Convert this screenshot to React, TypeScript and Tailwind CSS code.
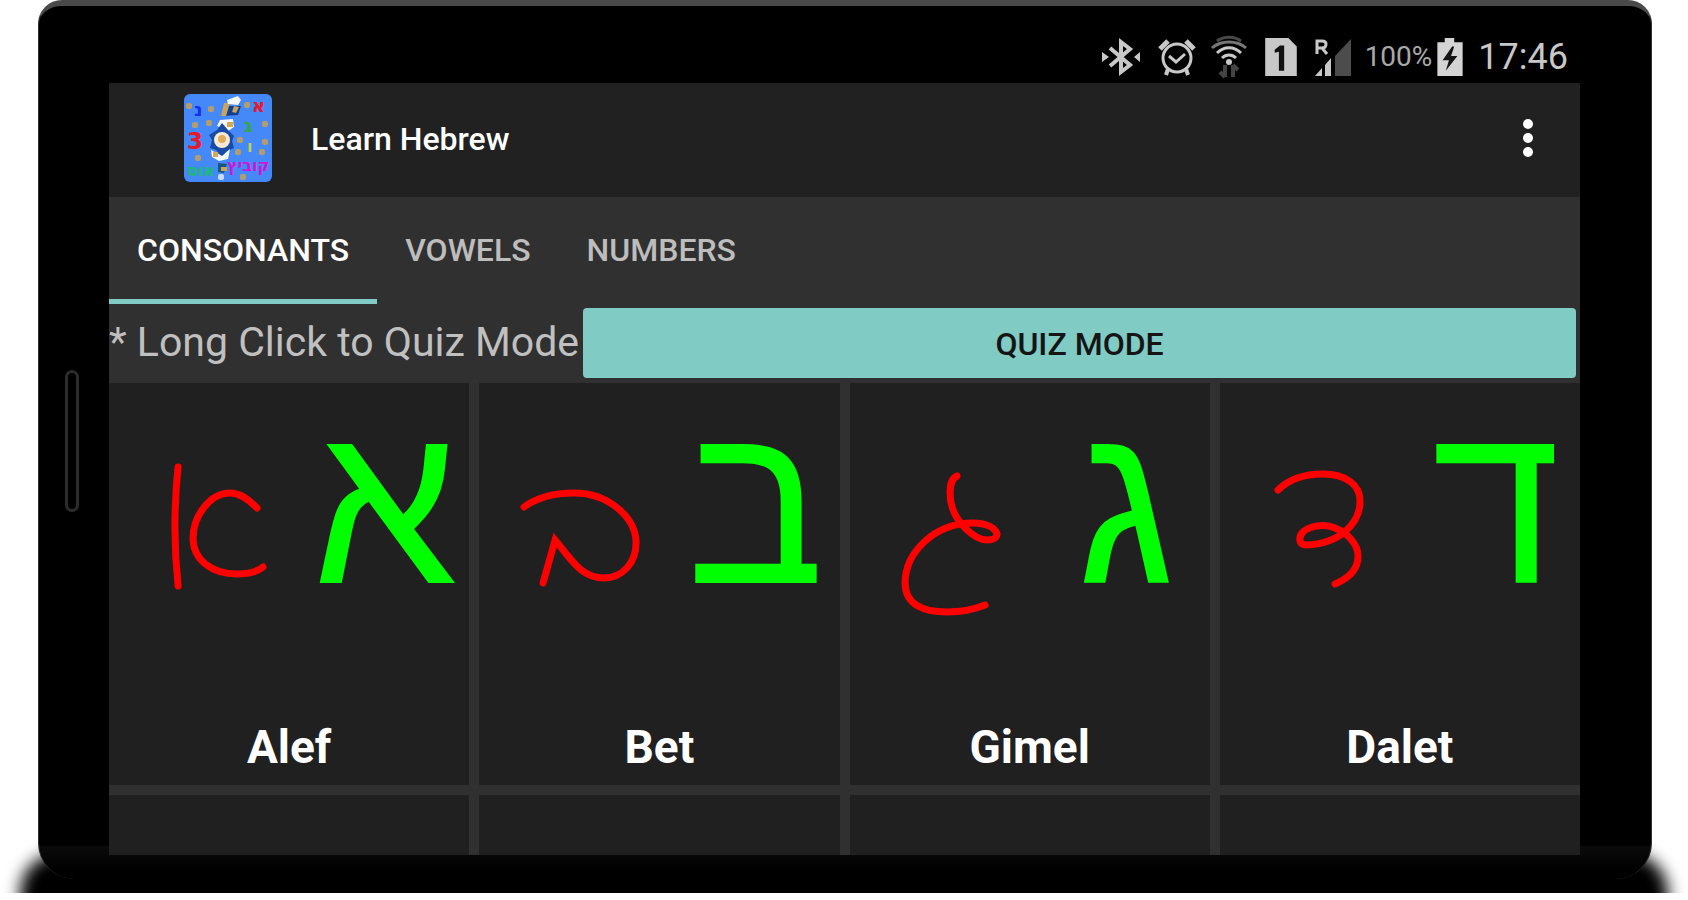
import { useState } from 'react';

const tabs = ['CONSONANTS', 'VOWELS', 'NUMBERS'];

const letters = [
  {
    name: 'Alef',
    print: 'א',
    strokes: [
      'M69 84 C65 122 65 165 69 203',
      'M148 125 C139 116 131 110 121 110 C101 110 84 133 84 155 C84 177 103 191 128 191 C139 191 148 189 154 184',
    ],
  },
  {
    name: 'Bet',
    print: 'ב',
    strokes: ['M45 124 C60 113 78 110 95 110 C130 110 157 135 157 160 C157 180 143 195 125 195 C102 195 92 176 76 157 L64 200'],
  },
  {
    name: 'Gimel',
    print: 'ג',
    strokes: [
      'M107 93 C101 96 100 102 100 110 C100 125 106 136 115 145 C122 152 129 157 137 157 C143 157 147 155 147 151 C145 144 135 140 123 140 C84 140 55 170 55 200 C55 222 74 229 97 229 C112 229 125 226 135 222',
    ],
  },
  {
    name: 'Dalet',
    print: 'ד',
    strokes: [
      'M58 107 C70 95 86 91 103 91 C126 91 140 102 140 118 C140 140 120 161 86 162 C78 162 78 153 84 148 C92 142 106 141 115 145 C128 150 138 162 138 173 C138 187 127 196 115 201',
    ],
  },
];

const confetti = [
  [5, 12], [27, 15], [63, 11], [11, 31], [25, 29], [81, 30], [56, 46], [81, 48], [54, 58], [78, 58], [14, 64], [59, 83],
];

function AppLogo() {
  return (
    <svg viewBox="0 0 88 88" className="size-22 rounded-md" aria-hidden="true">
      <rect width="88" height="88" fill="#4489f7" />
      {confetti.map(([x, y]) => (
        <rect key={`${x}-${y}`} x={x - 3} y={y - 3} width="6" height="6" rx="2" fill="#b59c6c" />
      ))}
      <path d="M40 12 L57 12 L54 21 L38 22 Z" fill="#123f8e" />
      <path d="M40 9 L46 9 L42 22 L37 22 Z M50 12 L55 13 L52 19 L48 18 Z" fill="#c9a45c" />
      <path d="M43 6 L54 2 L57 6 L54 11 L44 10 Z" fill="#f4f8ff" />
      <path d="M36 26 L49 25 L50 33 L44 37 L33 32 Z" fill="#f4f8ff" />
      <rect x="43" y="28" width="6" height="5" fill="#d9a950" />
      <path d="M38 29 L44 36 L50 42 L48 47 L50 54 L43 57 L38 63 L32 56 L26 54 L28 46 L25 41 L33 36 Z" fill="#194ba6" />
      <circle cx="38" cy="46" r="8" fill="#f6ead5" />
      <circle cx="38" cy="45" r="4" fill="#e0ad5d" />
      <path d="M27 56 L38 62 L46 55 L44 65 L35 67 L28 63 Z" fill="#f4f8ff" />
      <rect x="29" y="58" width="5" height="5" fill="#d9a950" />
      <path d="M34 69 L43 70 L40 79 L34 78 Z" fill="#19567c" />
      <rect x="37" y="73" width="6" height="4" fill="#c9a45c" />
      <rect x="34" y="80" width="6" height="6" rx="2" fill="#c5dcff" />
      <g className="font-['DejaVu_Sans'] font-bold">
        <text x="10" y="22" fontSize="19" fill="#1530f5">נ</text>
        <text x="68" y="18" fontSize="18" fill="#e8182c">א</text>
        <text x="3" y="55" fontSize="23" fill="#e8182c">3</text>
        <text x="60" y="38" fontSize="19" fill="#35a83c">ג</text>
        <text x="63" y="58" fontSize="16" fill="#b9d34a">ו</text>
        <text x="3" y="82" fontSize="16" fill="#18bd72">אוס</text>
        <text x="43" y="77" fontSize="16" fill="#d414d4">קוביץ</text>
      </g>
    </svg>
  );
}

function StatusIcons() {
  return (
    <div className="flex items-center" aria-hidden="true">
      {/* bluetooth */}
      <svg viewBox="0 0 40 40" className="size-10 mr-4" fill="none" stroke="#c8c8c8" strokeWidth="4">
        <path d="M9 11 L29 28 L20 35 V5 L29 12 L9 29" />
        <path d="M1 15 L8 20 L1 25 Z M39 15 L33 20 L39 25 Z" fill="#c8c8c8" stroke="none" />
      </svg>
      {/* alarm */}
      <svg viewBox="0 0 40 40" className="size-10 mr-3" fill="none" stroke="#c8c8c8" strokeWidth="3">
        <circle cx="20" cy="21" r="14" />
        <path d="M12 19 L19 25 L28 17" />
        <path d="M3 12 L11 4 M37 12 L29 4" strokeWidth="5" />
        <path d="M11 32 L9 38 M29 32 L31 38" strokeWidth="4" />
      </svg>
      {/* wifi */}
      <svg viewBox="0 0 40 44" className="h-11 w-10 mr-4" fill="none" strokeWidth="3">
        <path d="M8 6 C15 1 25 1 32 6" stroke="#484848" />
        <path d="M3 13 C12 5 28 5 37 13" stroke="#777" />
        <path d="M8 18 C15 11 25 11 32 18" stroke="#c8c8c8" />
        <path d="M13 23 C17 19 23 19 27 23" stroke="#c8c8c8" />
        <circle cx="20" cy="27" r="3" fill="#c8c8c8" />
        <path d="M16 30 V42 M11 37 L16 42 M24 42 V30 M24 30 L29 35" stroke="#444" strokeWidth="4" />
      </svg>
      {/* sim 1 */}
      <svg viewBox="0 0 30 38" className="h-10 w-8 mr-4">
        <path d="M0 1 H22 L30 9 V37 H0 Z" fill="#c8c8c8" />
        <path d="M9 12 L14 8 H18 V32 H13 V14 L9 15 Z" fill="#111" />
      </svg>
      {/* roaming signal */}
      <svg viewBox="0 0 40 40" className="size-10 mr-3">
        <path d="M22 19 L38 2 V39 H22 Z" fill="#4c4c4c" />
        <path d="M2 39 L9 31 V39 Z M12 28 L18 21 V39 H12 Z" fill="#c8c8c8" />
        <path d="M4 17 V4 H9 Q13 4 13 7 Q13 11 9 11 H4 M9 11 L14 17" fill="none" stroke="#c8c8c8" strokeWidth="3" />
      </svg>
    </div>
  );
}

export default function App() {
  const [activeTab, setActiveTab] = useState('CONSONANTS');
  const [quizMode, setQuizMode] = useState(false);

  return (
    <div className="min-h-screen bg-white font-['Roboto',sans-serif]">
      <div className="relative overflow-hidden pb-[14px] pl-[38px] pr-9">
        {/* ground shadow under the phone */}
        <div className="absolute inset-x-5 -bottom-6 h-16 rounded-t-[40px] bg-black blur-sm" />

        <div className="relative rounded-t-3xl rounded-b-[36px] border-x border-t-[6px] border-x-[#333] border-t-[#4a4a4a] bg-[linear-gradient(to_top,#000_8px,#0b0b0b_32px,#000_34px)] bg-black pb-6 pl-[70px] pr-[71px]">
          <div className="absolute left-[26px] top-[364px] h-[142px] w-[14px] rounded-full border-3 border-[#2c2c2c]" />

          <header className="flex h-[77px] items-end justify-end pr-3 text-[#c8c8c8]">
            <div className="flex h-13 items-center">
              <StatusIcons />
              <span className="mr-1 text-[28px] leading-none text-[#a8a8a8]">100%</span>
              <svg viewBox="0 0 26 38" className="mr-[14px] h-10 w-7" aria-hidden="true">
                <path d="M1 5 H8 V1 H17 V5 H25 V37 H1 Z" fill="#d4d4d4" />
                <path d="M15 9 L6 22 H12 L9 32 L20 18 H14 L17 9 Z" fill="#151515" />
              </svg>
              <time className="text-4xl leading-none">17:46</time>
            </div>
          </header>

          <main className="bg-[#303030]">
            <div className="flex h-[114px] items-center bg-[#212121] pb-1 pl-[75px] pr-9">
              <AppLogo />
              <h1 className="ml-[39px] pt-0.5 text-[32px] font-medium text-white">Learn Hebrew</h1>
              <button aria-label="More options" className="ml-auto flex w-8 flex-col items-center gap-1 py-2">
                <span className="size-[10px] rounded-full bg-white" />
                <span className="size-[10px] rounded-full bg-white" />
                <span className="size-[10px] rounded-full bg-white" />
              </button>
            </div>

            <nav className="flex h-[107px]">
              {tabs.map((tab) => (
                <button
                  key={tab}
                  onClick={() => setActiveTab(tab)}
                  className={`border-b-[5px] px-7 pt-1 text-[32px] font-medium ${
                    activeTab === tab ? 'border-[#80cbc4] text-white' : 'border-transparent text-[#bdbdbd]'
                  }`}
                >
                  {tab}
                </button>
              ))}
            </nav>

            <div className="flex h-[79px] items-start pr-1">
              <p className="pt-[10px] text-[41px] leading-[56px] text-[#c0c0c0]">* Long Click to Quiz Mode</p>
              <button
                onClick={() => setQuizMode(!quizMode)}
                className="ml-1 mt-1 h-[70px] flex-1 rounded-sm bg-[#80cbc4] pt-0.5 text-[32px] font-medium text-[#151515]"
              >
                QUIZ MODE
              </button>
            </div>

            <div className="grid grid-cols-4 gap-[10px]">
              {letters.map((letter) => (
                <button key={letter.name} className="flex h-[402px] flex-col bg-[#202020]">
                  <span className="flex h-[328px] w-full">
                    <svg viewBox="0 0 180 240" className="h-60 w-1/2" fill="none" stroke="#f00" strokeWidth="7" strokeLinecap="round" aria-hidden="true">
                      {letter.strokes.map((d) => (
                        <path key={d} d={d} />
                      ))}
                    </svg>
                    <span lang="he" className="w-1/2 pl-3 text-center font-['Liberation_Sans',sans-serif] text-[232px] leading-[240px] text-[#0f0]">
                      {letter.print}
                    </span>
                  </span>
                  <span className="w-full text-center text-[46px] font-bold leading-[72px] text-white">{letter.name}</span>
                </button>
              ))}
              {letters.map((letter) => (
                <div key={letter.name} className="h-[60px] bg-[#202020]" />
              ))}
            </div>
          </main>
        </div>
      </div>
    </div>
  );
}
